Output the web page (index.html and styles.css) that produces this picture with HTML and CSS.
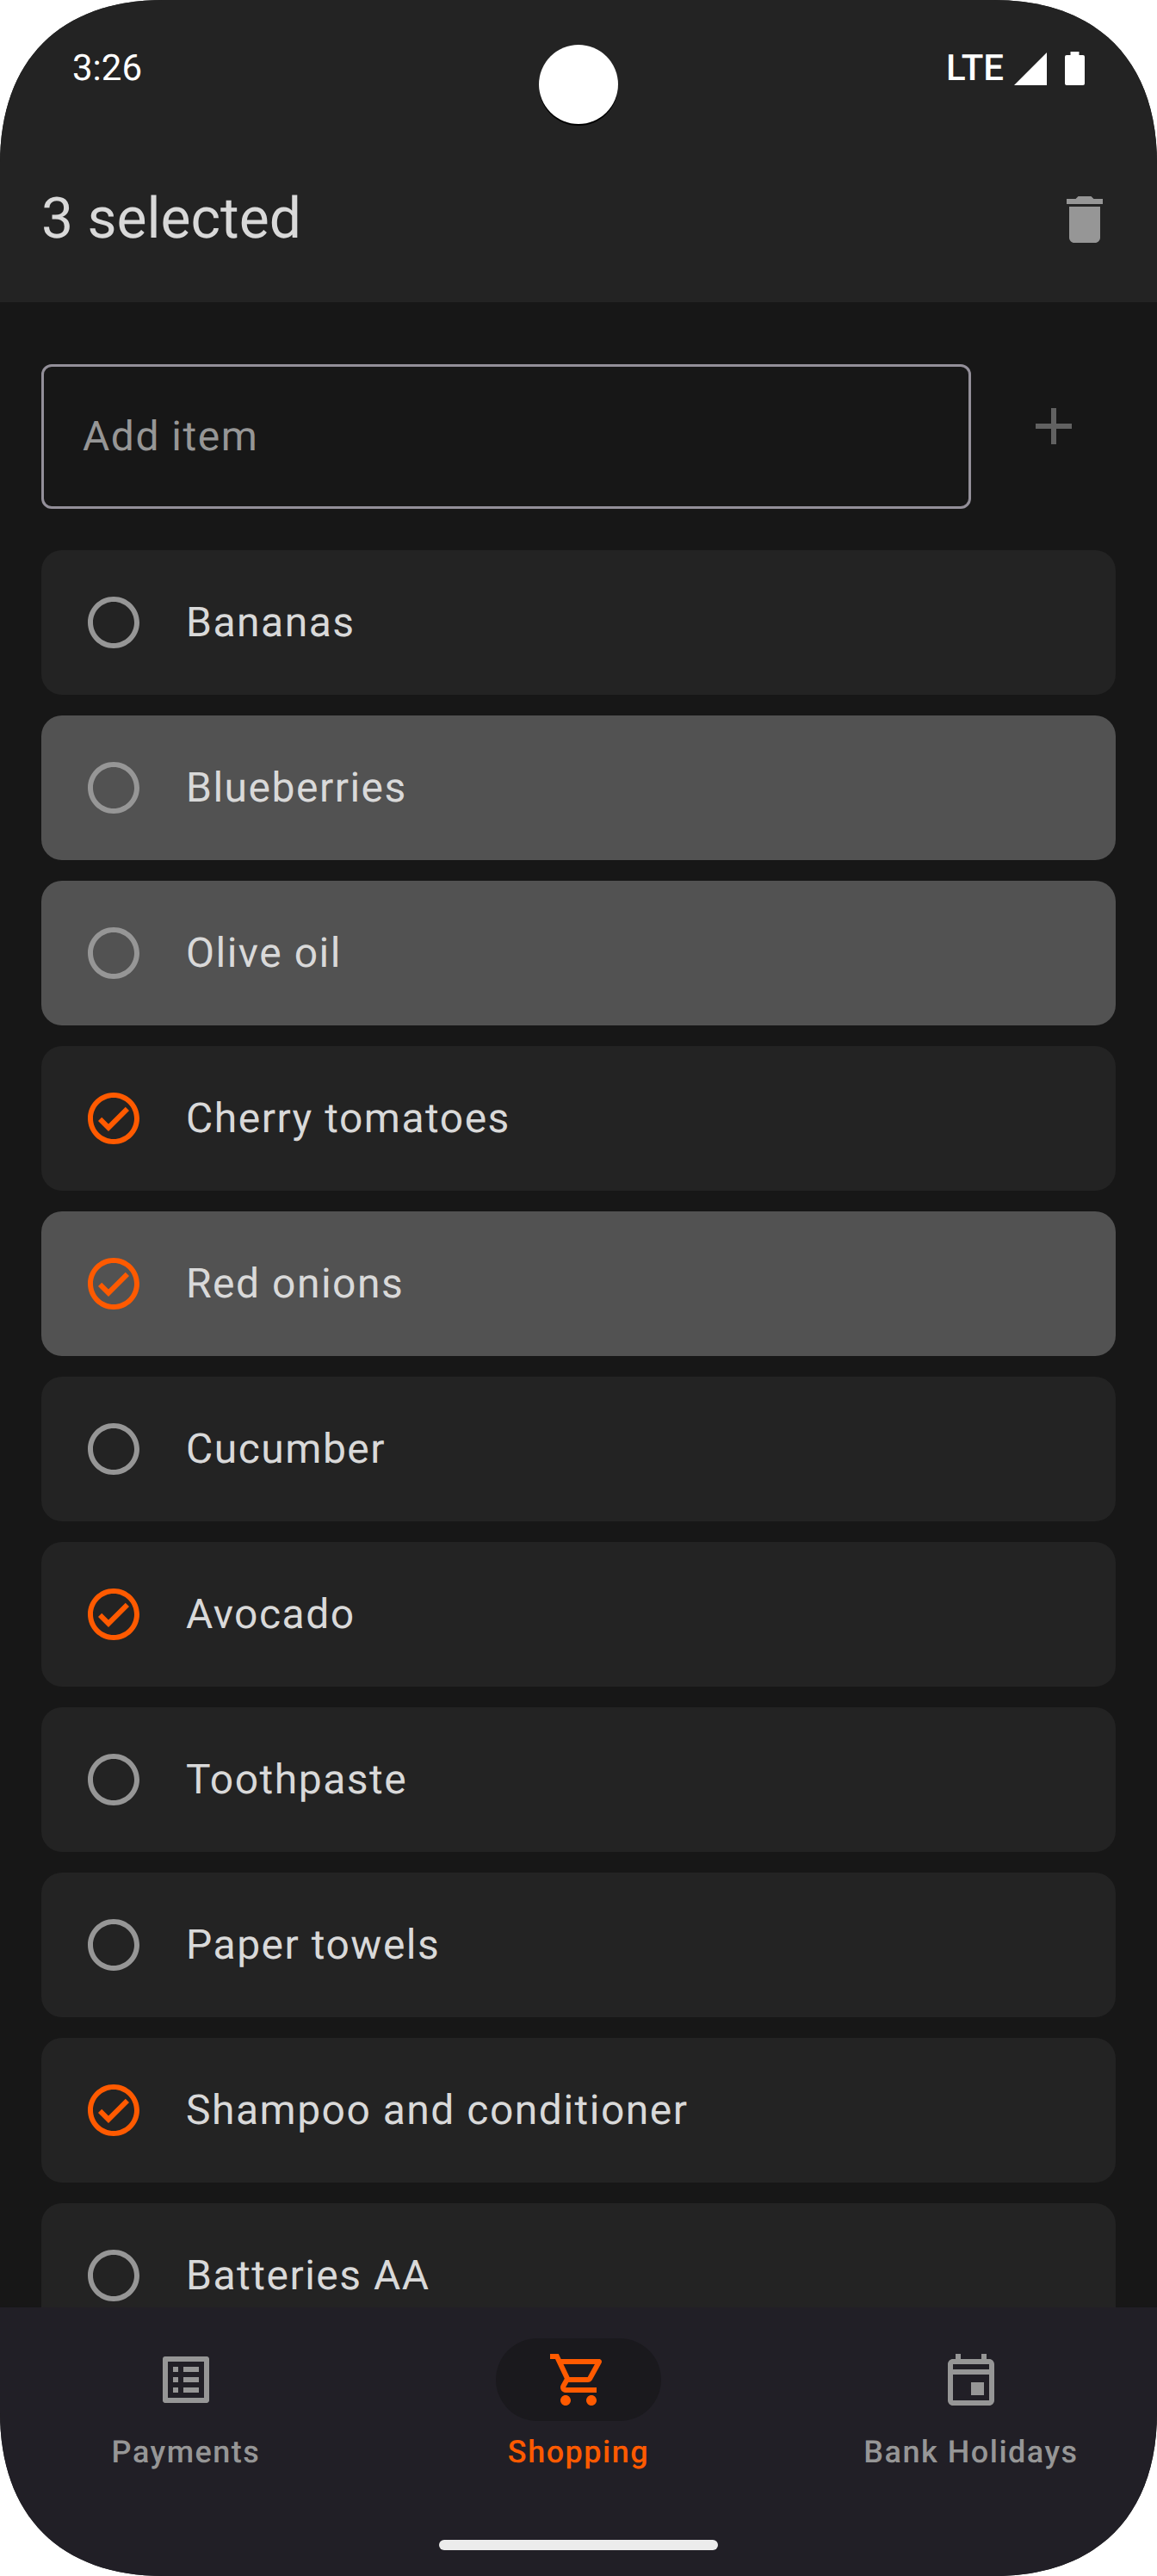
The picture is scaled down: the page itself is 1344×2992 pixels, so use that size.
FILE: index.html
```html
<!DOCTYPE html>
<html lang="en">
<head>
<meta charset="utf-8">
<title>Shopping</title>
<link rel="stylesheet" href="styles.css">
</head>
<body>
<svg class="defs" aria-hidden="true">
  <symbol id="open" viewBox="0 0 24 24"><path d="M12 2C6.48 2 2 6.48 2 12s4.48 10 10 10 10-4.48 10-10S17.52 2 12 2zm0 18c-4.42 0-8-3.58-8-8s3.58-8 8-8 8 3.58 8 8-3.58 8-8 8z"/></symbol>
  <symbol id="done" viewBox="0 0 24 24"><path d="M16.59 7.58L10 14.17l-2.59-2.58L6 13l4 4 8-8zM12 2C6.48 2 2 6.48 2 12s4.48 10 10 10 10-4.48 10-10S17.52 2 12 2zm0 18c-4.42 0-8-3.58-8-8s3.58-8 8-8 8 3.58 8 8-3.58 8-8 8z"/></symbol>
</svg>
<div class="phone">
  <header class="top">
    <div class="status">
      <span class="time">3:26</span>
      <div class="signals">
        <span class="network">LTE</span>
        <svg class="cell" viewBox="0 0 38 38"><path d="M0 38L38 0v38z"/></svg>
        <svg class="battery" viewBox="0 0 23 39"><path d="M6.5 0h10v4H21a2 2 0 0 1 2 2v31a2 2 0 0 1-2 2H2a2 2 0 0 1-2-2V6a2 2 0 0 1 2-2h4.500z"/></svg>
      </div>
    </div>
    <div class="bar">
      <h1>3 selected</h1>
      <svg class="icon" viewBox="0 0 24 24"><path d="M6 19c0 1.100.9 2 2 2h8c1.100 0 2-.9 2-2V7H6v12zM19 4h-3.500l-1-1h-5l-1 1H5v2h14V4z"/></svg>
    </div>
    <div class="camera"></div>
  </header>
  <main class="content">
    <div class="add">
      <div class="field">Add item</div>
      <svg class="icon plus" viewBox="0 0 24 24"><path d="M19 13h-6v6h-2v-6H5v-2h6V5h2v6h6v2z"/></svg>
    </div>
    <ul class="list">
      <li class="item"><svg class="icon"><use href="#open"/></svg>Bananas</li>
      <li class="item selected"><svg class="icon"><use href="#open"/></svg>Blueberries</li>
      <li class="item selected"><svg class="icon"><use href="#open"/></svg>Olive oil</li>
      <li class="item"><svg class="icon checked"><use href="#done"/></svg>Cherry tomatoes</li>
      <li class="item selected"><svg class="icon checked"><use href="#done"/></svg>Red onions</li>
      <li class="item"><svg class="icon"><use href="#open"/></svg>Cucumber</li>
      <li class="item"><svg class="icon checked"><use href="#done"/></svg>Avocado</li>
      <li class="item"><svg class="icon"><use href="#open"/></svg>Toothpaste</li>
      <li class="item"><svg class="icon"><use href="#open"/></svg>Paper towels</li>
      <li class="item"><svg class="icon checked"><use href="#done"/></svg>Shampoo and conditioner</li>
      <li class="item"><svg class="icon"><use href="#open"/></svg>Batteries AA</li>
    </ul>
  </main>
  <footer class="bottom">
    <nav class="tabs">
      <div class="tab">
        <div class="pill"><svg class="icon" viewBox="0 0 24 24"><path d="M11 7h6v2h-6zm0 4h6v2h-6zm0 4h6v2h-6zM7 7h2v2H7zm0 4h2v2H7zm0 4h2v2H7zM20.100 3H3.900c-.5 0-.9.400-.9.900v16.200c0 .400.400.900.900.900h16.200c.4 0 .9-.5.900-.9V3.900c0-.5-.5-.9-.9-.9zM19 19H5V5h14v14z"/></svg></div>
        <span>Payments</span>
      </div>
      <div class="tab active">
        <div class="pill"><svg class="icon" viewBox="0 0 24 24"><path d="M15.550 13c.75 0 1.410-.41 1.750-1.030l3.580-6.490c.37-.66-.11-1.480-.87-1.480H5.210l-.94-2H1v2h2l3.600 7.590-1.350 2.440C4.520 15.370 5.480 17 7 17h12v-2H7l1.100-2h7.450zM6.160 6h12.150l-2.760 5H8.530L6.160 6zM7 18c-1.100 0-1.990.9-1.990 2S5.900 22 7 22s2-.9 2-2-.9-2-2-2zm10 0c-1.100 0-1.990.9-1.990 2s.89 2 1.990 2 2-.9 2-2-.9-2-2-2z"/></svg></div>
        <span>Shopping</span>
      </div>
      <div class="tab">
        <div class="pill"><svg class="icon" viewBox="0 0 24 24"><path d="M19 4h-1V2h-2v2H8V2H6v2H5c-1.110 0-2 .9-2 2v14c0 1.100.89 2 2 2h14c1.100 0 2-.9 2-2V6c0-1.100-.9-2-2-2zm0 16H5V10h14v10zm0-12H5V6h14v2zM12 13h5v5h-5z"/></svg></div>
        <span>Bank Holidays</span>
      </div>
    </nav>
    <div class="home"></div>
  </footer>
</div>
</body>
</html>
```
FILE: styles.css
```css
* { box-sizing: border-box; }
body { margin: 0; background: #fff; font-family: Roboto, sans-serif; text-rendering: geometricPrecision; }
.defs { display: none; }
.phone {
  width: 1344px;
  height: 2992px;
  display: flex;
  flex-direction: column;
  overflow: hidden;
  clip-path: path("M0 190C0 70 70 0 190 0H1154C1274 0 1344 70 1344 190V2802C1344 2922 1274 2992 1154 2992H190C70 2992 0 2922 0 2802Z");
  background: #171717;
}
.icon { width: 72px; height: 72px; flex: none; fill: #969696; }

.top { position: relative; flex: none; height: 351px; background: #232323; }
.status {
  height: 159px;
  padding: 0 84px;
  display: flex;
  justify-content: space-between;
  align-items: center;
  color: #fff;
  font-size: 42px;
  line-height: 48px;
}
.network { font-weight: 500; }
.signals { display: flex; align-items: center; }
.signals svg { fill: #fff; }
.cell { width: 38px; height: 38px; margin-left: 12px; }
.battery { width: 23px; height: 39px; margin-left: 21px; }
.camera {
  position: absolute;
  left: 626px;
  top: 52px;
  width: 92px;
  height: 92px;
  border-radius: 50%;
  background: #fff;
  box-shadow: 0 2px 0 #000;
}
.bar {
  height: 192px;
  padding: 0 48px;
  display: flex;
  align-items: center;
  justify-content: space-between;
}
.bar h1 { margin: 0; font-size: 66px; font-weight: 400; line-height: 84px; color: #d9d9d9; }

.content { flex: 1; min-height: 0; overflow: hidden; padding: 72px 48px 0; }
.add { display: flex; align-items: flex-start; gap: 60px; }
.field {
  width: 1080px;
  height: 168px;
  padding: 0 45px;
  border: 3px solid #938f99;
  border-radius: 12px;
  font-size: 48px;
  line-height: 162px;
  letter-spacing: 1.5px;
  color: #969696;
}
.plus { margin-top: 36px; fill: #616161; }
.list {
  list-style: none;
  margin: 48px 0 0;
  padding: 0;
  display: flex;
  flex-direction: column;
  gap: 24px;
}
.item {
  flex: none;
  height: 168px;
  padding: 0 48px;
  display: flex;
  align-items: center;
  gap: 48px;
  border-radius: 24px;
  background: #232323;
  color: #d9d9d9;
  font-size: 48px;
  line-height: 72px;
  letter-spacing: 1.5px;
}
.selected { background: #525252; }
.icon.checked { fill: #ff5a00; }

.bottom { flex: none; height: 312px; background: #211f26; }
.tabs { display: flex; gap: 24px; height: 240px; padding-top: 36px; }
.tab {
  flex: 1;
  display: flex;
  flex-direction: column;
  align-items: center;
  gap: 12px;
  color: #969696;
  font-size: 36px;
  font-weight: 500;
  line-height: 48px;
  letter-spacing: 1.5px;
}
.pill {
  width: 192px;
  height: 96px;
  border-radius: 48px;
  display: flex;
  align-items: center;
  justify-content: center;
}
.active { color: #ff5a00; }
.active .pill { background: #1a191d; }
.active .icon { fill: #ff5a00; }
.home { width: 324px; height: 12px; margin: 30px auto 0; border-radius: 6px; background: #ececec; }
```
